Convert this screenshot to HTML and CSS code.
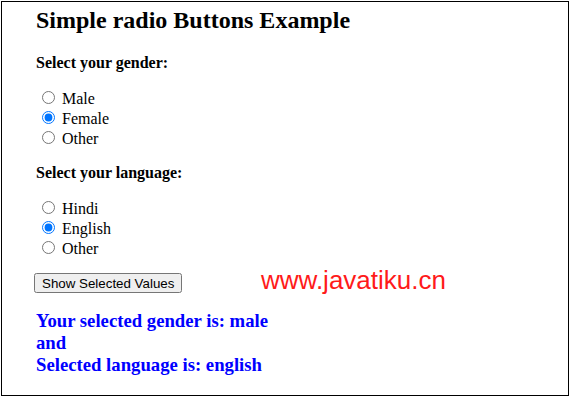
FILE: index.html
```html
<!DOCTYPE html>
<html lang="en">
<head>
    <meta charset="UTF-8">
    <meta name="viewport" content="width=device-width, initial-scale=1.0">
    <title>Simple radio Buttons Example</title>
    <link rel="stylesheet" href="styles.css">
</head>
<body>
    <div class="frame">
        <h2 class="title">Simple radio Buttons Example</h2>

        <form class="choices">
            <p class="question">Select your gender:</p>
            <div class="options">
                <label class="option"><input type="radio" name="gender" value="male"> Male</label>
                <label class="option"><input type="radio" name="gender" value="female" checked> Female</label>
                <label class="option"><input type="radio" name="gender" value="other"> Other</label>
            </div>

            <p class="question">Select your language:</p>
            <div class="options">
                <label class="option"><input type="radio" name="language" value="hindi"> Hindi</label>
                <label class="option"><input type="radio" name="language" value="english" checked> English</label>
                <label class="option"><input type="radio" name="language" value="other"> Other</label>
            </div>

            <button type="button" class="show-btn" onclick="showValues()">Show Selected Values</button>
        </form>

        <h3 class="result" id="result">Your selected gender is: male<br>and<br>Selected language is: english</h3>

        <div class="watermark">www.javatiku.cn</div>
    </div>

    <script>
        function showValues() {
            var gender = document.querySelector('input[name="gender"]:checked');
            var language = document.querySelector('input[name="language"]:checked');
            document.getElementById('result').innerHTML =
                'Your selected gender is: ' + (gender ? gender.value : '') +
                '<br>and<br>Selected language is: ' + (language ? language.value : '');
        }
    </script>
</body>
</html>
```

FILE: styles.css
```css
body {
    margin: 0;
    background-color: #fff;
    font-family: "Liberation Serif", "Times New Roman", serif;
    color: #000;
}
.frame {
    position: relative;
    box-sizing: border-box;
    width: 568px;
    height: 395px;
    margin: 1px 0 0 1px;
    padding: 4px 0 0 34px;
    border: 1px solid #000;
}
.title {
    margin: 0;
    font-size: 24px;
    line-height: 28px;
    font-weight: bold;
}
.question {
    margin: 19px 0 15px;
    font-size: 16px;
    line-height: 20px;
    font-weight: bold;
}
.options {
    font-size: 16px;
}
.option {
    display: block;
    height: 20px;
    line-height: 20px;
}
.option input {
    margin: 3px 3px 0 6px;
}
.choices .options + .question {
    margin-top: 15px;
}
.show-btn {
    margin: 15px 0 0 -2px;
    height: 20px;
    padding: 1px 6px;
    font-family: Arial, "Liberation Sans", sans-serif;
    font-size: 13.33px;
}
.result {
    margin: 17px 0 0;
    color: #0000ff;
    font-size: 18.72px;
    line-height: 22px;
    font-weight: bold;
}
.watermark {
    position: absolute;
    left: 259px;
    top: 263px;
    color: #ff1a1a;
    font-family: "Liberation Sans", Arial, sans-serif;
    font-size: 26px;
    line-height: 30px;
}
```
